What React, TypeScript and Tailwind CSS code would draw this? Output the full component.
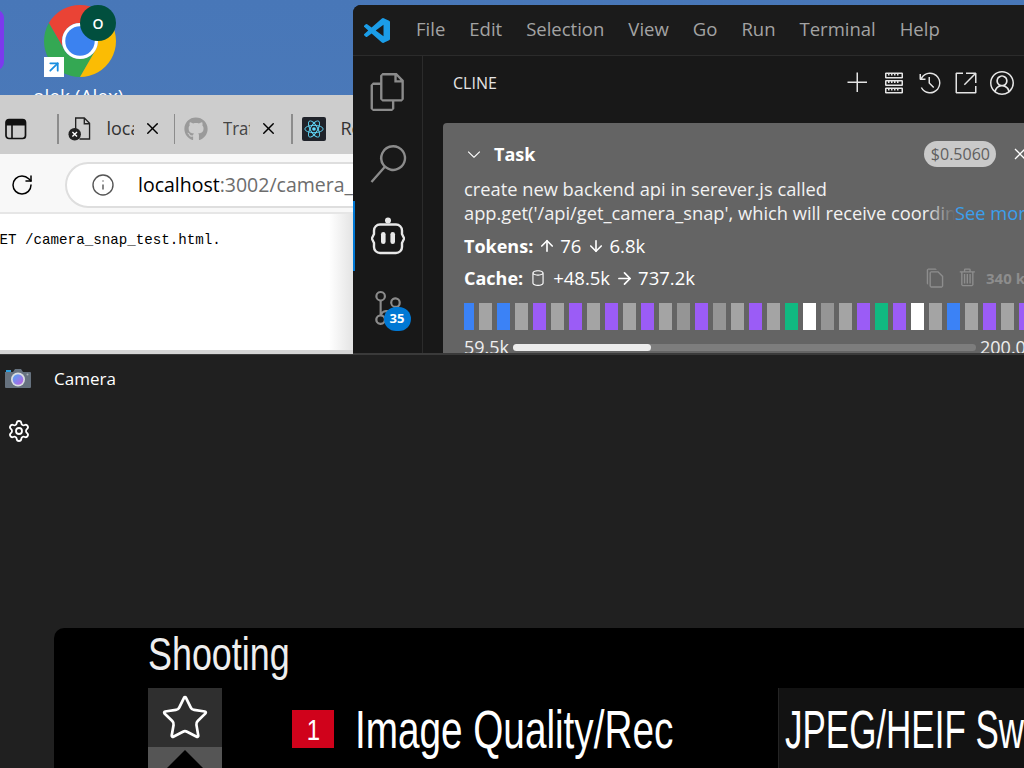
import { FaGithub } from "react-icons/fa";
import {
  VscAccount, VscAdd, VscChevronDown, VscClose, VscCopy,
  VscDatabase, VscFiles, VscHistory, VscLinkExternal, VscSearch, VscServer, VscSourceControl, VscTrash,
} from "react-icons/vsc";
import { ArrowDown, ArrowRight, ArrowUp, Info, RotateCw, Settings, Star, X } from "lucide-react";

const bars = [
  "b", "g", "b", "g", "p", "g", "p", "g", "p", "g", "p", "g", "d", "p", "d", "g", "p", "g", "e", "w", "d", "g", "p", "e", "p", "w", "g", "b", "g", "p", "g", "p",
];

function Bar({ k, first }: { k: string; first: boolean }) {
  const w = first ? "w-[10px]" : "w-[13px]";
  if (k === "b") return <div className={`${w} h-full bg-[#3b82f6]`} />;
  if (k === "p") return <div className={`${w} h-full bg-[#9b5cf6]`} />;
  if (k === "e") return <div className={`${w} h-full bg-[#10b981]`} />;
  if (k === "w") return <div className={`${w} h-full bg-white`} />;
  if (k === "d") return <div className={`${w} h-full bg-[#959595]`} />;
  return <div className={`${w} h-full bg-[#a4a4a4]`} />;
}

function ChromeIcon() {
  return (
    <svg viewBox="0 0 44 44" className="w-[72px] h-[72px]">
      <g transform="translate(-2 -2)">
        <path d="M4.95 13A22 22 0 0 1 43.05 13L24 13A11 11 0 0 0 14.47 29.5Z" fill="#ea4335" />
        <path d="M4.95 13A22 22 0 0 0 24 46L33.5 29.5A11 11 0 0 1 14.47 29.5Z" fill="#34a853" />
        <path d="M24 46A22 22 0 0 0 43.05 13L24 13A11 11 0 0 1 33.5 29.5Z" fill="#fbbc04" />
        <circle cx="24" cy="24" r="11" fill="#fff" />
        <circle cx="24" cy="24" r="9" fill="#3b82f0" />
      </g>
    </svg>
  );
}

function VSCodeLogo() {
  return (
    <svg viewBox="0 0 24 24" preserveAspectRatio="none" className="w-[26px] h-[25px]">
      <path
        d="M23.15 2.587L18.21.21a1.494 1.494 0 0 0-1.705.29l-9.46 8.63-4.12-3.128a.999.999 0 0 0-1.276.057L.327 7.261A1 1 0 0 0 .326 8.74L3.899 12 .326 15.26a1 1 0 0 0 .001 1.479L1.65 17.94a.999.999 0 0 0 1.276.057l4.12-3.128 9.46 8.63a1.492 1.492 0 0 0 1.704.29l4.942-2.377A1.5 1.5 0 0 0 24 20.06V3.939a1.5 1.5 0 0 0-.85-1.352zm-5.146 14.861L10.826 12l7.178-5.448v10.896z"
        fill="#1b9de8"
      />
    </svg>
  );
}

function Robot() {
  return (
    <svg viewBox="0 0 34 38" className="w-[34px] h-[38px]" fill="none">
      <circle cx="17" cy="3.5" r="3" fill="#e8e8e8" />
      <path
        d="M9 7.5h16a6 6 0 0 1 6 6V17l2.2 4.5L31 26v4a6 6 0 0 1-6 6H9a6 6 0 0 1-6-6v-4L.8 21.5 3 17v-3.5a6 6 0 0 1 6-6z"
        stroke="#e8e8e8"
        strokeWidth="2.4"
      />
      <rect x="10" y="15" width="4.6" height="12" rx="2.3" fill="#e8e8e8" />
      <rect x="19.4" y="15" width="4.6" height="12" rx="2.3" fill="#e8e8e8" />
    </svg>
  );
}

function CameraIcon() {
  return (
    <svg viewBox="0 0 28 22" className="w-[28px] h-[22px]">
      <defs>
        <linearGradient id="lens" x1="0" y1="0" x2="1" y2="1">
          <stop offset="0" stopColor="#4fa8f5" />
          <stop offset="1" stopColor="#c05ce0" />
        </linearGradient>
      </defs>
      <path d="M1 5h8l2-3h6l2 3h7a1 1 0 0 1 1 1v14a1 1 0 0 1-1 1H2a1 1 0 0 1-1-1V6a1 1 0 0 1 0-1z" fill="#66727f" />
      <rect x="2" y="3" width="5" height="2" fill="#2b9fe0" />
      <circle cx="14" cy="12.5" r="7" fill="#d9dde2" />
      <circle cx="14" cy="12.5" r="5.3" fill="url(#lens)" />
      <circle cx="23.5" cy="7.5" r="1" fill="#aab2bb" />
    </svg>
  );
}

function DocErrorIcon() {
  return (
    <svg viewBox="0 0 24 26" className="w-[23px] h-[25px]" fill="none">
      <path d="M8 14V2h9l5.5 5.5V24H12M17 2v6h5.5" stroke="#222" strokeWidth="1.4" />
      <circle cx="7" cy="19" r="6.5" fill="#222" />
      <path d="M4.6 16.6l4.8 4.8M9.4 16.6l-4.8 4.8" stroke="#fff" strokeWidth="1.4" />
    </svg>
  );
}

function ReactIcon() {
  return (
    <div className="w-[24px] h-[24px] rounded-[2px] bg-[#20232a] flex items-center justify-center">
      <svg viewBox="-12 -12 24 24" className="w-[22px] h-[22px]" fill="none" stroke="#61dafb" strokeWidth="1">
        <circle r="2" fill="#61dafb" stroke="none" />
        <ellipse rx="10" ry="4" />
        <ellipse rx="10" ry="4" transform="rotate(60)" />
        <ellipse rx="10" ry="4" transform="rotate(120)" />
      </svg>
    </div>
  );
}

function Sep() {
  return <div className="w-[1.5px] h-[30px] bg-[#8c8c8c] shrink-0" />;
}

export default function App() {
  return (
    <div className="relative w-[1024px] h-[768px] overflow-hidden bg-gradient-to-b from-[#4877b8] to-[#5582be] font-['Open_Sans',sans-serif]">
      {/* Desktop icons */}
      <div className="absolute left-[-30px] top-[10px] w-[34px] h-[60px] rounded-[8px] bg-[#7c3aed]" />
      <div className="absolute left-[44px] top-[5px]">
        <ChromeIcon />
      </div>
      <div className="absolute left-[80px] top-[5px] w-[36px] h-[36px] rounded-full bg-[#014f3e] flex items-center justify-center text-white text-[14px] font-semibold">
        O
      </div>
      <div className="absolute left-[44px] top-[57px] w-[20px] h-[20px] bg-white flex items-center justify-center">
        <ArrowUp className="text-[#1b8fe0] w-[18px] h-[18px] rotate-45" strokeWidth={2.4} />
      </div>
      <div className="absolute left-[33px] top-[82px] text-white text-[19px] whitespace-nowrap">olek (Alex) -</div>

      {/* VS Code window */}
      <div className="absolute left-[353px] top-[5px] w-[680px] h-[348px] bg-[#181818] rounded-tl-[8px] overflow-hidden flex flex-col">
        <div className="h-[51px] bg-[#1b1b1b] border-b border-[#2b2b2b] flex items-center pl-[11px] shrink-0">
          <VSCodeLogo />
          <div className="ml-[26px] pb-[2px] flex items-center gap-[24px] text-[18.5px] text-[#a3a3a3]">
            <span>File</span>
            <span>Edit</span>
            <span>Selection</span>
            <span>View</span>
            <span>Go</span>
            <span>Run</span>
            <span>Terminal</span>
            <span>Help</span>
          </div>
        </div>
        <div className="flex-1 flex min-h-0">
          <div className="relative w-[70px] shrink-0 border-r border-[#2b2b2b] bg-[#181818] flex flex-col items-center pt-[17px] text-[#8b8b8b]">
            <VscFiles className="w-[38px] h-[38px]" />
            <VscSearch className="mt-[34px] w-[38px] h-[38px]" />
            <div className="mt-[34px]"><Robot /></div>
            <div className="relative mt-[34px] h-[38px]">
              <VscSourceControl className="w-[34px] h-[38px]" />
              <div className="absolute left-[13px] top-[18px] w-[27px] h-[24px] rounded-full bg-[#0078d4] text-white text-[13px] font-bold flex items-center justify-center">
                35
              </div>
            </div>
            <div className="absolute left-0 top-[145px] w-[1.5px] h-[70px] bg-[#0078d4]" />
          </div>
          <div className="flex-1 min-w-0 flex flex-col">
            <div className="h-[67px] flex items-center pl-[30px] pr-[10px] pb-[14px] shrink-0 text-[#e4e4e4]">
              <span className="text-[16px] w-[393px] shrink-0">CLINE</span>
              <div className="flex items-center gap-[12px]">
                <VscAdd className="w-[24px] h-[24px]" />
                <VscServer className="w-[24px] h-[24px]" />
                <VscHistory className="w-[24px] h-[24px]" />
                <VscLinkExternal className="w-[24px] h-[24px]" />
                <VscAccount className="w-[24px] h-[24px]" />
              </div>
            </div>
            <div className="ml-[20px] w-[640px] h-[240px] rounded-t-[4px] bg-[#646464] pl-[21px] pt-[16px] text-white shrink-0">
              <div className="flex items-center h-[30px]">
                <VscChevronDown className="w-[20px] h-[20px]" />
                <span className="ml-[10px] text-[18px] font-bold">Task</span>
                <div className="ml-[389px] w-[72px] h-[26px] rounded-full bg-[#c9c9c9] text-[#5f5f5f] text-[16px] flex items-center justify-center">
                  $0.5060
                </div>
                <VscClose className="ml-[14px] w-[20px] h-[20px]" />
              </div>
              <div className="mt-[8px] text-[18.3px] leading-[24px] whitespace-nowrap text-[#f2f2f2]">
                <div>create new backend api in serever.js called</div>
                <div className="flex">
                  <span className="relative w-[491px] overflow-hidden">
                    app.get('/api/get_camera_snap', which will receive coordinates
                    <span className="absolute right-0 top-0 bottom-0 w-[30px] bg-gradient-to-r from-transparent to-[#646464]" />
                  </span>
                  <span className="text-[#3b9fec]">See more</span>
                </div>
              </div>
              <div className="mt-[9px] h-[24px] flex items-center text-[18.5px] whitespace-nowrap">
                <span className="font-bold text-[18px]">Tokens:</span>
                <ArrowUp className="ml-[5px] w-[18px] h-[20px]" strokeWidth={2.2} />
                <span className="ml-[4px]">76</span>
                <ArrowDown className="ml-[6px] w-[18px] h-[20px]" strokeWidth={2.2} />
                <span className="ml-[4px]">6.8k</span>
              </div>
              <div className="mt-[8px] h-[24px] flex items-center text-[18.5px] whitespace-nowrap">
                <span className="font-bold text-[18px]">Cache:</span>
                <VscDatabase className="ml-[6px] w-[18px] h-[20px]" />
                <span className="ml-[6px]">+48.5k</span>
                <ArrowRight className="ml-[5px] w-[19px] h-[19px]" strokeWidth={2.2} />
                <span className="ml-[4px]">737.2k</span>
                <VscCopy className="ml-[229px] w-[22px] h-[26px] text-[#8d8d8d]" />
                <VscTrash className="ml-[11px] w-[22px] h-[26px] text-[#8d8d8d]" />
                <span className="ml-[7px] text-[15px] font-bold text-[#8d8d8d]">340 kB</span>
              </div>
              <div className="mt-[13px] h-[27px] flex gap-[5px]">
                {bars.map((k, i) => (
                  <Bar key={i} k={k} first={i === 0} />
                ))}
              </div>
              <div className="mt-[5px] flex items-center text-[18px] text-[#eeeeee] whitespace-nowrap leading-[24px]">
                <span className="w-[49px]">59.5k</span>
                <div className="w-[463px] h-[7px] rounded-full bg-[#7d7d7d]">
                  <div className="w-[138px] h-full rounded-full bg-[#ececec]" />
                </div>
                <span className="ml-[4px]">200.0k</span>
              </div>
            </div>
          </div>
        </div>
      </div>

      {/* Camera window */}
      <div className="absolute left-0 top-[353px] w-[1024px] h-[415px] bg-[#202020] border-t-2 border-[#3a3a3a] flex">
        <div className="w-[54px] shrink-0 flex flex-col items-start pl-[4px] pt-[12px]">
          <CameraIcon />
          <Settings className="ml-[3px] mt-[30px] w-[24px] h-[24px] text-white" strokeWidth={1.8} />
        </div>
        <div className="flex-1 min-w-0 flex flex-col">
          <div className="h-[48px] flex items-center text-[17px] text-white shrink-0">Camera</div>
          <div className="mt-[225px] flex-1 min-h-0 bg-black rounded-tl-[10px] overflow-hidden pl-[94px] text-white font-['Liberation_Sans',sans-serif]">
            <div className="h-[60px] flex items-start pt-[1px]">
              <span className="inline-block origin-left scale-x-[0.78] text-[46px] leading-[50px] text-[#eeeeee] whitespace-nowrap">Shooting</span>
            </div>
            <div className="flex h-[80px]">
              <div className="w-[74px] shrink-0 flex flex-col">
                <div className="h-[62px] bg-[#2f2f2f] flex items-center justify-center">
                  <Star className="w-[50px] h-[52px] text-white" strokeWidth={1.3} />
                </div>
                <div className="flex-1 bg-[#555555] flex justify-center pt-[3px]">
                  <div className="w-0 h-0 border-x-[18px] border-x-transparent border-b-[18px] border-b-black" />
                </div>
              </div>
              <div className="ml-[70px] w-[42px] h-[38px] mt-[22px] bg-[#d0021b] flex items-center justify-center text-[30px] shrink-0">
                <span className="inline-block scale-x-[0.8]">1</span>
              </div>
              <div className="ml-[21px] w-[423px] shrink-0 h-[62px] mt-[11px] flex items-center">
                <span className="inline-block origin-left scale-x-[0.73] text-[53px] leading-[62px] whitespace-nowrap">Image Quality/Rec</span>
              </div>
              <div className="flex-1 min-w-0 h-full bg-[#121212] border-l border-[#242424] pl-[6px] overflow-hidden">
                <div className="h-[62px] mt-[11px] flex items-center">
                  <span className="inline-block origin-left scale-x-[0.66] text-[53px] leading-[62px] whitespace-nowrap">JPEG/HEIF Switching</span>
                </div>
              </div>
            </div>
          </div>
        </div>
      </div>

      {/* Browser window */}
      <div className="absolute left-0 top-[95px] w-[353px] h-[259px] bg-white flex flex-col overflow-hidden">
        <div className="h-[59px] bg-[#cdcdcd] flex items-center pl-[5px] pt-[8px] text-[#222] shrink-0">
          <svg viewBox="0 0 22 22" className="w-[22px] h-[22px] shrink-0" fill="none">
            <rect x="1" y="1.5" width="19.5" height="19" rx="3" stroke="#111" strokeWidth="1.7" />
            <path d="M1 3.5a2 2 0 0 1 2-2h15.5a2 2 0 0 1 2 2v4H1z" fill="#111" />
            <path d="M7 7v13" stroke="#111" strokeWidth="1.6" />
          </svg>
          <div className="ml-[30px]"><Sep /></div>
          <div className="ml-[9px] shrink-0"><DocErrorIcon /></div>
          <div className="ml-[16px] w-[27px] overflow-hidden text-[18px] text-[#333] whitespace-nowrap shrink-0">local</div>
          <X className="ml-[9px] w-[19px] h-[19px] shrink-0 text-black" strokeWidth={1.8} />
          <div className="ml-[12px]"><Sep /></div>
          <FaGithub className="ml-[9px] w-[24px] h-[24px] text-[#9a9a9a] shrink-0" />
          <div className="ml-[15px] w-[27px] overflow-hidden text-[19px] text-[#444] whitespace-nowrap shrink-0">
            <span className="inline-block origin-left scale-x-[0.88]">Traffic</span>
          </div>
          <X className="ml-[9px] w-[19px] h-[19px] shrink-0 text-black" strokeWidth={1.8} />
          <div className="ml-[13px]"><Sep /></div>
          <div className="ml-[9px] shrink-0"><ReactIcon /></div>
          <div className="ml-[15px] text-[18px] text-[#333] whitespace-nowrap">React</div>
        </div>
        <div className="h-[60px] bg-[#f8f8f8] border-b-2 border-[#e6e6e6] flex items-center pl-[10px] pt-[3px] shrink-0">
          <RotateCw className="w-[24px] h-[24px] text-black shrink-0" strokeWidth={1.5} />
          <div className="ml-[31px] w-[340px] shrink-0 h-[46px] rounded-full border-2 border-[#dedede] bg-white flex items-center pl-[24px]">
            <Info className="w-[24px] h-[24px] text-[#555] shrink-0" strokeWidth={1.4} />
            <span className="ml-[23px] text-[19.5px] whitespace-nowrap text-black">
              localhost<span className="text-[#6d6d6d]">:3002/camera_snap_test.html</span>
            </span>
          </div>
        </div>
        <div className="relative flex-1 bg-white pt-[16px]">
          <div className="ml-[-9px] font-['Liberation_Mono',monospace] text-[14.2px] leading-[20px] text-black whitespace-nowrap">
            GET /camera_snap_test.html.
          </div>
          <div className="absolute right-0 top-0 bottom-0 w-[24px] bg-gradient-to-r from-transparent to-[#e4e4e4]" />
        </div>
        <div className="h-[4px] bg-[#d5d5d5] shrink-0" />
      </div>
    </div>
  );
}
